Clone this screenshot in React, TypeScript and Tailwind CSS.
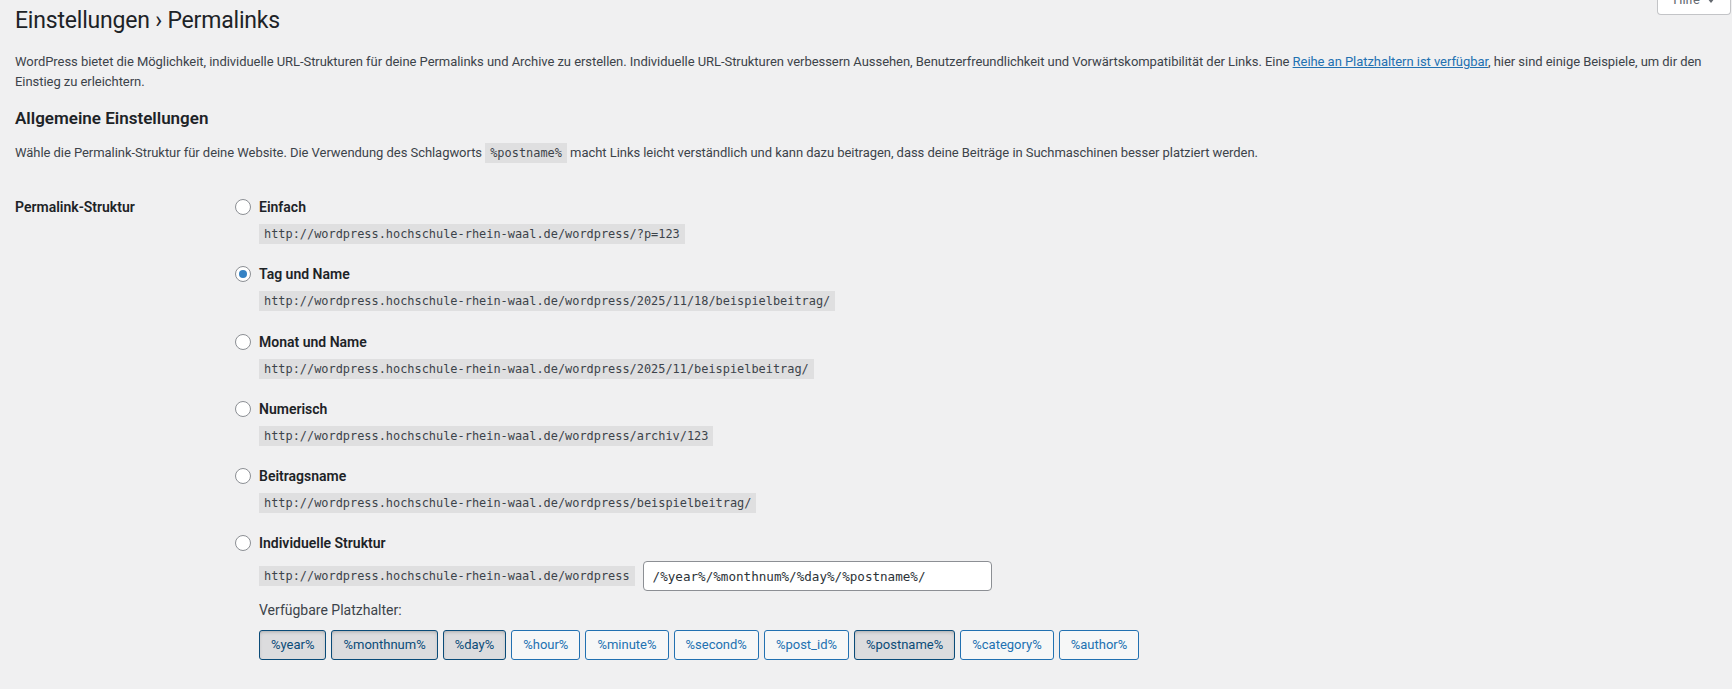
import React from "react";

type Option = { label: string; url: string; checked?: boolean };

const options: Option[] = [
  { label: "Einfach", url: "http://wordpress.hochschule-rhein-waal.de/wordpress/?p=123" },
  {
    label: "Tag und Name",
    url: "http://wordpress.hochschule-rhein-waal.de/wordpress/2025/11/18/beispielbeitrag/",
    checked: true,
  },
  { label: "Monat und Name", url: "http://wordpress.hochschule-rhein-waal.de/wordpress/2025/11/beispielbeitrag/" },
  { label: "Numerisch", url: "http://wordpress.hochschule-rhein-waal.de/wordpress/archiv/123" },
  { label: "Beitragsname", url: "http://wordpress.hochschule-rhein-waal.de/wordpress/beispielbeitrag/" },
];

const tags: { name: string; active?: boolean }[] = [
  { name: "%year%", active: true },
  { name: "%monthnum%", active: true },
  { name: "%day%", active: true },
  { name: "%hour%" },
  { name: "%minute%" },
  { name: "%second%" },
  { name: "%post_id%" },
  { name: "%postname%", active: true },
  { name: "%category%" },
  { name: "%author%" },
];

function Radio({ checked }: { checked?: boolean }) {
  return (
    <span className="mt-[2px] flex h-[16px] w-[16px] shrink-0 items-center justify-center rounded-full border border-[#8c8f94] bg-white">
      {checked && <span className="h-[8px] w-[8px] rounded-full bg-[#3582c4]" />}
    </span>
  );
}

function Code({ children }: { children: React.ReactNode }) {
  return (
    <code className="inline-block h-[20px] bg-[rgba(0,0,0,0.07)] px-[5px] font-['DejaVu_Sans_Mono',monospace] text-[11.92px] leading-[20px] text-[#3c434a]">
      {children}
    </code>
  );
}

export default function App() {
  return (
    <div className="relative min-h-[689px] overflow-hidden bg-[#f0f0f1] pl-[15px] pr-[8px] font-['Roboto',sans-serif] text-[13px] text-[#3c434a]">
      {/* contextual help tab */}
      <button className="absolute right-[1px] top-[-12px] flex h-[27px] items-start gap-[7px] rounded-b-[4px] border border-t-0 border-[#c3c4c7] bg-white px-[15px] pt-[3px] text-[13px] leading-[18px] text-[#646970]">
        <span>Hilfe</span>
        <svg className="mt-[7px]" width="8" height="5" viewBox="0 0 8 5">
          <path d="M0 0h8L4 5z" fill="#646970" />
        </svg>
      </button>

      <h1 className="pt-[6px] text-[23px] font-normal leading-[30px] tracking-[-0.2px] text-[#1d2327]">
        Einstellungen › Permalinks
      </h1>

      <p className="mt-[16px] leading-[20px] tracking-[-0.05px]">
        WordPress bietet die Möglichkeit, individuelle URL-Strukturen für deine Permalinks und Archive zu erstellen.
        Individuelle URL-Strukturen verbessern Aussehen, Benutzerfreundlichkeit und Vorwärtskompatibilität der Links.
        Eine{" "}
        <a href="#" className="text-[#2271b1] underline">
          Reihe an Platzhaltern ist verfügbar
        </a>
        , hier sind einige Beispiele, um dir den
        <br />
        Einstieg zu erleichtern.
      </p>

      <h2 className="mt-[15px] text-[17px] font-semibold leading-[22px] text-[#1d2327]">Allgemeine Einstellungen</h2>

      <p className="mt-[14px] leading-[20px] tracking-[-0.05px]">
        Wähle die Permalink-Struktur für deine Website. Die Verwendung des Schlagworts{" "}
        <code className="bg-[rgba(0,0,0,0.07)] px-[5px] py-[3px] font-['DejaVu_Sans_Mono',monospace] text-[11.92px] tracking-normal">
          %postname%
        </code>{" "}
        macht Links leicht verständlich und kann dazu beitragen, dass deine Beiträge in Suchmaschinen besser platziert
        werden.
      </p>

      <div className="mt-[34px] flex">
        <div className="w-[220px] shrink-0 text-[14px] font-semibold leading-[20px] text-[#1d2327]">
          Permalink-Struktur
        </div>

        <div className="flex flex-col">
          {options.map((o) => (
            <div key={o.label} className="mb-[20.3px] flex items-start gap-[8px]">
              <Radio checked={o.checked} />
              <div className="flex flex-col items-start">
                <span className="text-[14px] font-semibold leading-[20px] text-[#1d2327]">{o.label}</span>
                <div className="mt-[7px]">
                  <Code>{o.url}</Code>
                </div>
              </div>
            </div>
          ))}

          <div className="flex items-start gap-[8px]">
            <Radio />
            <div className="flex flex-col items-start">
              <span className="text-[14px] font-semibold leading-[20px] text-[#1d2327]">Individuelle Struktur</span>
              <div className="mt-[8px] flex items-center gap-[8px]">
                <Code>http://wordpress.hochschule-rhein-waal.de/wordpress</Code>
                <input
                  readOnly
                  value="/%year%/%monthnum%/%day%/%postname%/"
                  className="h-[30px] w-[349px] rounded-[4px] border border-[#8c8f94] bg-white px-[9px] font-['DejaVu_Sans_Mono',monospace] text-[12.6px] text-[#2c3338] outline-none"
                />
              </div>
              <p className="mt-[9px] text-[14px] leading-[20px] text-[#3c434a]">Verfügbare Platzhalter:</p>
              <div className="mt-[10px] flex gap-[5px]">
                {tags.map((t) => (
                  <button
                    key={t.name}
                    className={
                      t.active
                        ? "h-[30px] rounded-[3px] border border-[#0a4b78] bg-[#dcdcde] px-[11px] text-[13px] leading-[28px] text-[#0a4b78] shadow-[inset_0_2px_5px_-3px_rgba(0,0,0,0.5)]"
                        : "h-[30px] rounded-[3px] border border-[#2271b1] bg-[#f6f7f7] px-[11px] text-[13px] leading-[28px] text-[#2271b1]"
                    }
                  >
                    {t.name}
                  </button>
                ))}
              </div>
            </div>
          </div>
        </div>
      </div>
    </div>
  );
}
